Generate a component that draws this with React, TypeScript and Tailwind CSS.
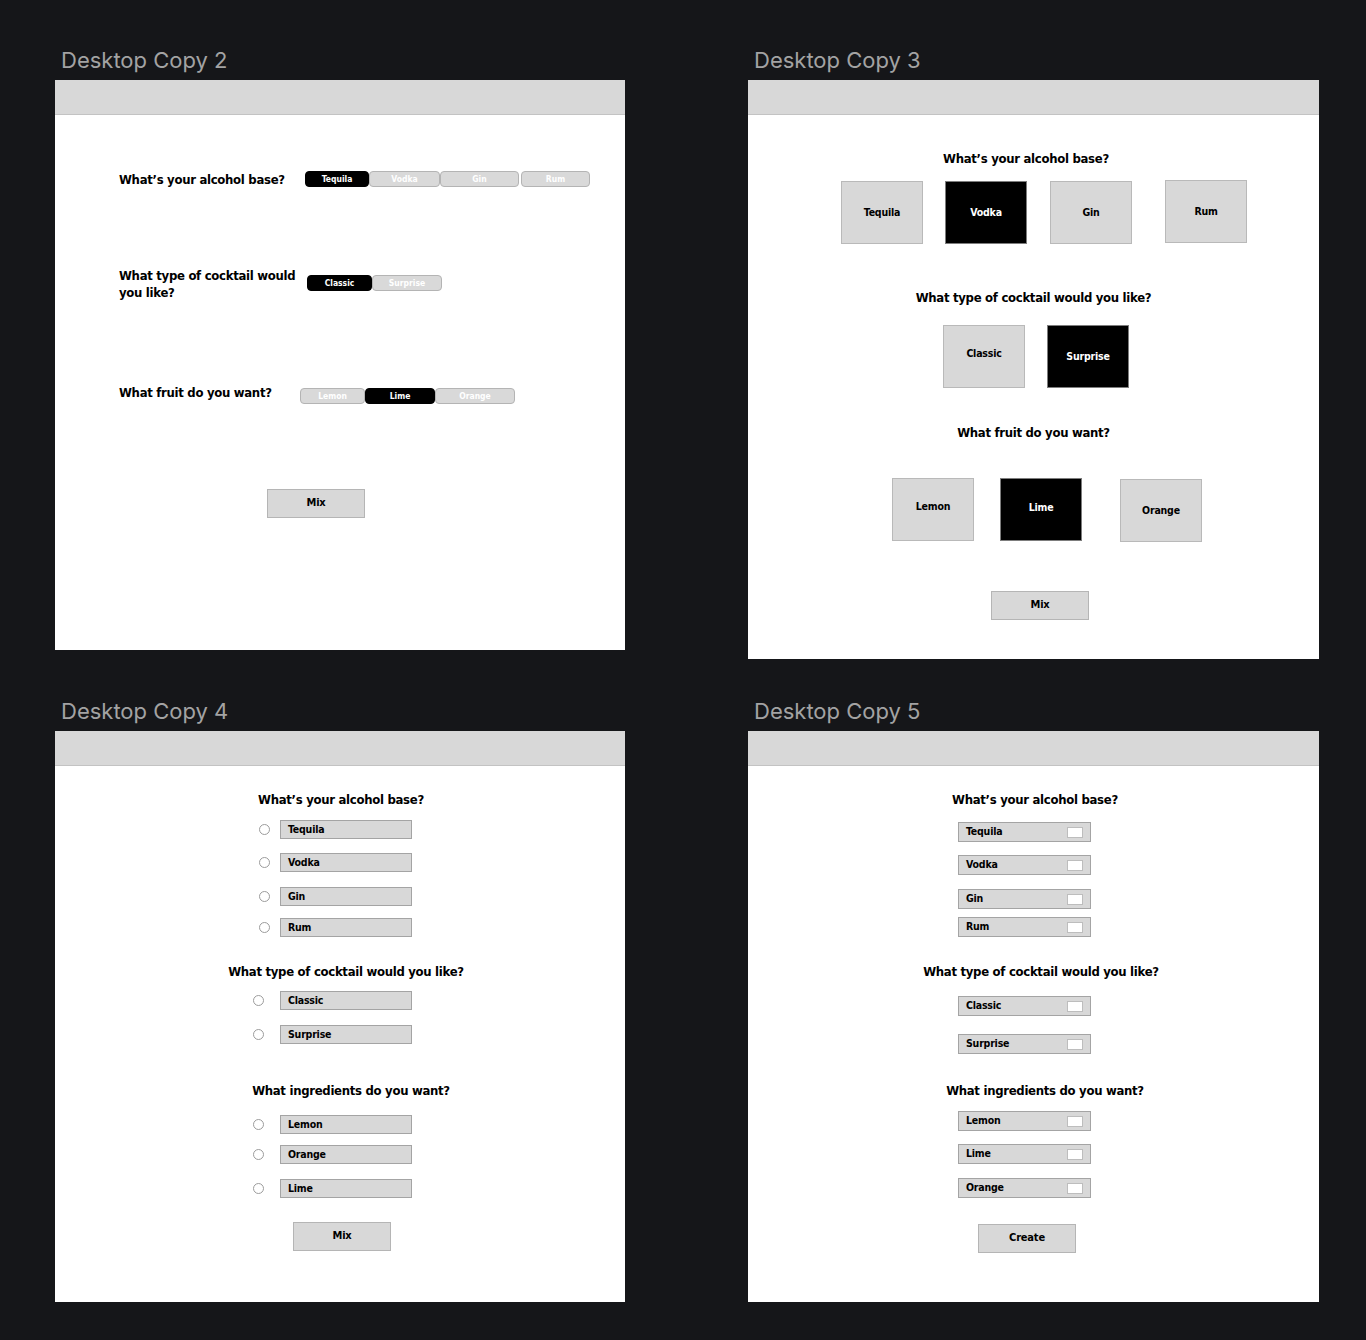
import React from 'react'

const narrow = "font-['DejaVu_Sans_Condensed','Liberation_Sans_Narrow',sans-serif]"
const qText = 'text-[13px] leading-[17px] tracking-[-0.3px] font-bold text-black whitespace-nowrap'

type SegItem = { label: string; w: string; active?: boolean; extra?: string }

function Segments({ items }: { items: SegItem[] }) {
  return (
    <div className="flex">
      {items.map(it => (
        <div
          key={it.label}
          className={`${it.w} ${it.extra ?? ''} h-[16px] rounded-[4px] border flex items-center justify-center text-[8.5px] font-bold text-white ${
            it.active ? 'bg-black border-black' : 'bg-[#d9d9d9] border-[#b4b4b4]'
          }`}
        >
          {it.label}
        </div>
      ))}
    </div>
  )
}

function Tile({ label, active, extra }: { label: string; active?: boolean; extra?: string }) {
  return (
    <div
      className={`w-[82px] h-[63px] border flex items-center justify-center text-[10.5px] tracking-[-0.2px] font-bold ${extra ?? ''} ${
        active ? 'bg-black border-[#7d7d7d] text-white' : 'bg-[#d8d8d8] border-[#b9b9b9] text-black'
      }`}
    >
      {label}
    </div>
  )
}

function GrayButton({ label, extra }: { label: string; extra: string }) {
  return (
    <div className={`${extra} w-[98px] h-[29px] bg-[#d8d8d8] border border-[#b5b5b5] flex items-center justify-center text-[11px] tracking-[-0.2px] font-bold text-black`}>
      {label}
    </div>
  )
}

function Question({ children, extra }: { children: React.ReactNode; extra: string }) {
  return <div className={`${extra} ${qText} text-center`}>{children}</div>
}

function RadioRow({ label, extra, pad, gap }: { label: string; extra: string; pad: string; gap: string }) {
  return (
    <div className={`${extra} ${pad} flex items-center`}>
      <div className="w-[11px] h-[11px] rounded-full border border-[#9c9c9c] bg-white shrink-0" />
      <div className={`${gap} w-[132px] h-[19px] bg-[#d8d8d8] border border-[#a4a4a4] flex items-center pl-[7px] text-[10.5px] tracking-[-0.2px] font-bold text-black`}>
        {label}
      </div>
    </div>
  )
}

function CheckRow({ label, extra }: { label: string; extra: string }) {
  return (
    <div className={`${extra} ml-[210px] w-[133px] h-[20px] bg-[#d8d8d8] border border-[#a4a4a4] flex items-center justify-between pl-[7px] pr-[7px] text-[10.5px] tracking-[-0.2px] font-bold text-black`}>
      <span>{label}</span>
      <div className="w-[16px] h-[11px] bg-white border border-[#bdbdbd]" />
    </div>
  )
}

function Frame({ title, h, children }: { title: string; h: string; children: React.ReactNode }) {
  return (
    <div>
      <div className="h-[40px] flex items-center pl-[6px] text-[22px] text-[#a3a3a3] font-['Inter',sans-serif]">{title}</div>
      <div className={`${h} bg-white flex flex-col ${narrow}`}>
        <div className="h-[35px] shrink-0 bg-[#d8d8d8] border-b border-[#c3c3c3]" />
        {children}
      </div>
    </div>
  )
}

export default function App() {
  return (
    <div className="min-h-screen bg-[#151619] pl-[55px] pt-[40px] pb-[38px]">
      <div className="grid grid-cols-[570px_571px] gap-x-[123px] gap-y-[32px] items-start">
        <Frame title="Desktop Copy 2" h="h-[570px]">
          <div className="flex flex-col pl-[64px]">
            <div className="mt-[56px] flex items-start">
              <div className={`w-[180px] ${qText}`}>What’s your alcohol base?</div>
              <div className="ml-[6px]">
                <Segments
                  items={[
                    { label: 'Tequila', w: 'w-[64px]', active: true },
                    { label: 'Vodka', w: 'w-[71px]' },
                    { label: 'Gin', w: 'w-[79px]' },
                    { label: 'Rum', w: 'w-[69px]', extra: 'ml-[2px]' },
                  ]}
                />
              </div>
            </div>
            <div className="mt-[79px] flex items-start">
              <div className={`w-[180px] ${qText}`}>
                What type of cocktail would
                <br />
                you like?
              </div>
              <div className="ml-[8px] mt-[8px]">
                <Segments
                  items={[
                    { label: 'Classic', w: 'w-[65px]', active: true },
                    { label: 'Surprise', w: 'w-[70px]' },
                  ]}
                />
              </div>
            </div>
            <div className="mt-[83px] flex items-start">
              <div className={`w-[180px] ${qText}`}>What fruit do you want?</div>
              <div className="ml-[1px] mt-[4px]">
                <Segments
                  items={[
                    { label: 'Lemon', w: 'w-[65px]' },
                    { label: 'Lime', w: 'w-[70px]', active: true },
                    { label: 'Orange', w: 'w-[80px]' },
                  ]}
                />
              </div>
            </div>
            <GrayButton label="Mix" extra="mt-[85px] ml-[148px]" />
          </div>
        </Frame>

        <Frame title="Desktop Copy 3" h="h-[579px]">
          <Question extra="mt-[35px] pr-[15px]">What’s your alcohol base?</Question>
          <div className="mt-[14px] flex pl-[93px]">
            <Tile label="Tequila" />
            <Tile label="Vodka" active extra="ml-[22px]" />
            <Tile label="Gin" extra="ml-[23px]" />
            <Tile label="Rum" extra="ml-[33px] -mt-[1px]" />
          </div>
          <Question extra="mt-[45px]">What type of cocktail would you like?</Question>
          <div className="mt-[19px] flex pl-[195px]">
            <Tile label="Classic" extra="pb-[6px]" />
            <Tile label="Surprise" active extra="ml-[22px]" />
          </div>
          <Question extra="mt-[36px]">What fruit do you want?</Question>
          <div className="mt-[37px] flex items-start pl-[144px]">
            <Tile label="Lemon" extra="pb-[6px]" />
            <Tile label="Lime" active extra="ml-[26px] pb-[4px]" />
            <Tile label="Orange" extra="ml-[38px] mt-[1px]" />
          </div>
          <GrayButton label="Mix" extra="mt-[49px] ml-[243px]" />
        </Frame>

        <Frame title="Desktop Copy 4" h="h-[571px]">
          <Question extra="mt-[25px] pl-[2px]">What’s your alcohol base?</Question>
          <RadioRow label="Tequila" extra="mt-[12px]" pad="pl-[204px]" gap="ml-[10px]" />
          <RadioRow label="Vodka" extra="mt-[14px]" pad="pl-[204px]" gap="ml-[10px]" />
          <RadioRow label="Gin" extra="mt-[15px]" pad="pl-[204px]" gap="ml-[10px]" />
          <RadioRow label="Rum" extra="mt-[12px]" pad="pl-[204px]" gap="ml-[10px]" />
          <Question extra="mt-[26px] pl-[12px]">What type of cocktail would you like?</Question>
          <RadioRow label="Classic" extra="mt-[11px]" pad="pl-[198px]" gap="ml-[16px]" />
          <RadioRow label="Surprise" extra="mt-[15px]" pad="pl-[198px]" gap="ml-[16px]" />
          <Question extra="mt-[38px] pl-[22px]">What ingredients do you want?</Question>
          <RadioRow label="Lemon" extra="mt-[16px]" pad="pl-[198px]" gap="ml-[16px]" />
          <RadioRow label="Orange" extra="mt-[11px]" pad="pl-[198px]" gap="ml-[16px]" />
          <RadioRow label="Lime" extra="mt-[15px]" pad="pl-[198px]" gap="ml-[16px]" />
          <GrayButton label="Mix" extra="mt-[24px] ml-[238px]" />
        </Frame>

        <Frame title="Desktop Copy 5" h="h-[571px]">
          <Question extra="mt-[25px] pl-[3px]">What’s your alcohol base?</Question>
          <CheckRow label="Tequila" extra="mt-[14px]" />
          <CheckRow label="Vodka" extra="mt-[13px]" />
          <CheckRow label="Gin" extra="mt-[14px]" />
          <CheckRow label="Rum" extra="mt-[8px]" />
          <Question extra="mt-[26px] pl-[15px]">What type of cocktail would you like?</Question>
          <CheckRow label="Classic" extra="mt-[16px]" />
          <CheckRow label="Surprise" extra="mt-[18px]" />
          <Question extra="mt-[28px] pl-[23px]">What ingredients do you want?</Question>
          <CheckRow label="Lemon" extra="mt-[12px]" />
          <CheckRow label="Lime" extra="mt-[13px]" />
          <CheckRow label="Orange" extra="mt-[14px]" />
          <GrayButton label="Create" extra="mt-[26px] ml-[230px]" />
        </Frame>
      </div>
    </div>
  )
}
